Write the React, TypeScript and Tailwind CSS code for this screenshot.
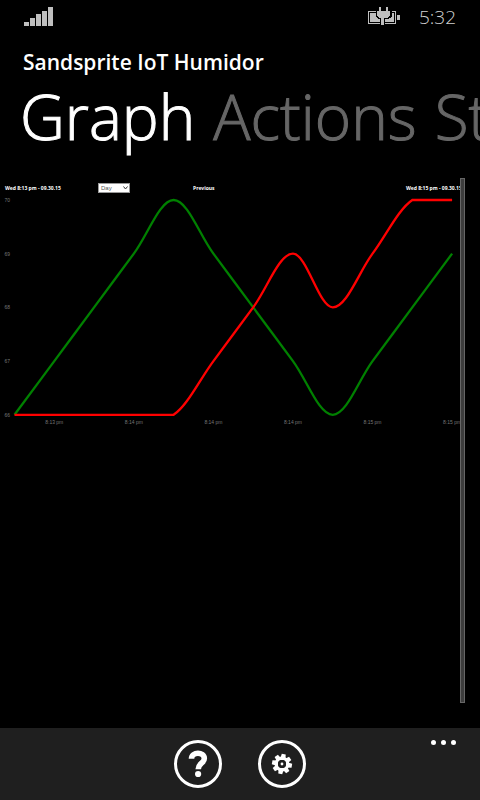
import React from "react";

type Point = { x: number; y: number };

const STEP = 438 / 11;
const TOP = 22;
const BOTTOM = 237;
const TENSION = 0.35;

const humidity = [66, 67, 68, 69, 70, 69, 68, 67, 66, 67, 68, 69];
const temperature = [66, 66, 66, 66, 66, 67, 68, 69, 68, 69, 70, 70];

const yFor = (value: number) => BOTTOM - ((value - 66) * (BOTTOM - TOP)) / 4;
const clamp = (y: number) => Math.max(TOP, Math.min(BOTTOM, y));

// Cubic spline whose handles are kept inside the plot area.
function smoothPath(values: number[]): string {
  const points: Point[] = values.map((v, i) => ({ x: 14.5 + i * STEP, y: yFor(v) }));
  const handles = points.map((p, i) => {
    const a = points[i - 1] ?? p;
    const b = points[i + 1] ?? p;
    const dx = (TENSION * (b.x - a.x)) / 2;
    const dy = (TENSION * (b.y - a.y)) / 2;
    return {
      in: { x: p.x - dx, y: clamp(p.y - dy) },
      out: { x: p.x + dx, y: clamp(p.y + dy) },
    };
  });
  let d = `M${points[0].x},${points[0].y}`;
  for (let i = 1; i < points.length; i++) {
    const from = handles[i - 1].out;
    const to = handles[i].in;
    d += `C${from.x},${from.y},${to.x},${to.y},${points[i].x},${points[i].y}`;
  }
  return d;
}

const timeLabels = ["8:13 pm", "8:14 pm", "8:14 pm", "8:14 pm", "8:15 pm", "8:15 pm"];

function StatusBar() {
  return (
    <div className="flex h-[34px] items-center justify-between px-6">
      <svg width="30" height="20" viewBox="0 0 30 20" fill="#bfbfbf" shapeRendering="crispEdges" aria-label="Signal">
        <rect x="0" y="15" width="5" height="4" />
        <rect x="6" y="11" width="5" height="8" />
        <rect x="12" y="7" width="5" height="12" />
        <rect x="18" y="4" width="5" height="15" />
        <rect x="24" y="0" width="5" height="19" />
      </svg>
      <div className="flex items-center gap-[18px]">
        <svg width="33" height="20" viewBox="0 0 33 20" shapeRendering="crispEdges" aria-label="Battery charging">
          <path d="M0 4H28V17H0Z" fill="#bfbfbf" />
          <path d="M1 5H27V16H1Z" fill="#000" />
          <path d="M2 6H26V15H2Z" fill="#bfbfbf" />
          <path d="M8 3H24V10L20 12H17V17H12V12H10L8 10Z" fill="#000" />
          <path d="M18 13H26V15H18Z" fill="#bfbfbf" />
          <path d="M24 6H26V15H24Z" fill="#bfbfbf" />
          <path d="M11 0H13V4H18V0H20V4H22V9L19 11H16V18H13V11H11L9 9V4H11Z" fill="#bfbfbf" />
          <rect x="29" y="8" width="3" height="5" fill="#bfbfbf" />
        </svg>
        <span className="text-[19px] leading-6 font-light text-[#d0d0d0]">5:32</span>
      </div>
    </div>
  );
}

function Chart() {
  return (
    <svg viewBox="0 0 466 256" className="block w-[97%]" role="img" aria-label="Humidity and temperature">
      <g fill="none" strokeWidth="2.3">
        <path d={smoothPath(humidity)} stroke="#008000" />
        <path d={smoothPath(temperature)} stroke="#ff0000" />
      </g>
      <g fill="#777" fontSize="5" style={{ fontFamily: '"Liberation Sans", sans-serif' }}>
        {[70, 69, 68, 67, 66].map((v) => (
          <text key={v} x="10" y={yFor(v) + 2} textAnchor="end">{v}</text>
        ))}
        {timeLabels.map((label, i) => (
          <text key={i} x={14.5 + (i * 2 + 1) * STEP} y="246" textAnchor="middle">{label}</text>
        ))}
      </g>
    </svg>
  );
}

export default function App() {
  return (
    <div className="relative flex min-h-screen flex-col overflow-hidden bg-black text-white [font-family:'Open_Sans','Noto_Sans',sans-serif]">
      <StatusBar />
      <h1 className="mt-3.5 pl-[23px] text-[21px] leading-7 font-semibold">Sandsprite IoT Humidor</h1>
      <nav className="mt-0.5 flex gap-[18px] pl-5 text-[62px] leading-[76px] font-light whitespace-nowrap [-webkit-text-stroke:1px_currentColor]">
        <button className="text-white">Graph</button>
        <button className="text-[#666]">Actions</button>
        <button className="text-[#666]">Status</button>
      </nav>

      <main className="relative mt-6 flex-1">
        <div className="mr-[18px] grid h-5 grid-cols-[93px_95px_1fr_56px] items-center pl-[5px] text-[5px] leading-[10px] font-bold whitespace-nowrap">
          <span>Wed 8:13 pm - 09.30.15</span>
          <div className="relative flex w-8 items-center">
            <select
              aria-label="Range"
              className="h-[10px] w-full appearance-none border border-[#999] bg-white p-0 pl-0.5 text-[6px] leading-[8px] font-normal text-[#555] [font-family:'Liberation_Sans',sans-serif]"
              defaultValue="Day"
            >
              <option>Day</option>
              <option>Week</option>
            </select>
            <svg className="pointer-events-none absolute right-0.5" width="5" height="4" viewBox="0 0 5 4" fill="none" stroke="#333">
              <path d="M.5.5 2.5 3 4.5.5" />
            </svg>
          </div>
          <button className="justify-self-start">Previous</button>
          <span>Wed 8:15 pm - 09.30.15</span>
        </div>
        <div className="-mt-5">
          <Chart />
        </div>
        <div className="absolute top-0 right-[15px] bottom-[25px] w-[5px] border border-[#666] bg-[#3d3d3d]" />
      </main>

      <footer className="grid h-[72px] grid-cols-[1fr_auto_1fr] bg-[#1f1f1f]">
        <span />
        <div className="flex items-center gap-9">
          <button aria-label="Help" className="flex size-12 items-center justify-center rounded-full border-[3px] border-white">
            <svg width="26" height="32" viewBox="0 0 26 32" fill="none">
              <path d="M6.5 10.7C6.5 3.5 19.3 3.5 19.3 10.5C19.3 15.5 13.2 15 13.2 21.3" stroke="#fff" strokeWidth="5.6" />
              <circle cx="13.1" cy="26" r="3.1" fill="#fff" />
            </svg>
          </button>
          <button aria-label="Settings" className="flex size-12 items-center justify-center rounded-full border-[3px] border-white">
            <svg width="22" height="22" viewBox="-11 -11 22 22">
              <g fill="#fff" transform="rotate(10)">
                {[0, 45, 90, 135, 180, 225, 270, 315].map((a) => (
                  <path key={a} d="M-2.6 -5L-2 -10H2L2.6 -5Z" transform={`rotate(${a})`} />
                ))}
              </g>
              <circle r="5.7" fill="none" stroke="#fff" strokeWidth="3.4" />
              <circle r="4" fill="#1f1f1f" />
              <circle r="1.4" fill="#fff" />
            </svg>
          </button>
        </div>
        <button aria-label="More" className="mt-3 mr-6 flex h-1.5 gap-[5px] self-start justify-self-end">
          <span className="size-[5px] rounded-full bg-white" />
          <span className="size-[5px] rounded-full bg-white" />
          <span className="size-[5px] rounded-full bg-white" />
        </button>
      </footer>
    </div>
  );
}
